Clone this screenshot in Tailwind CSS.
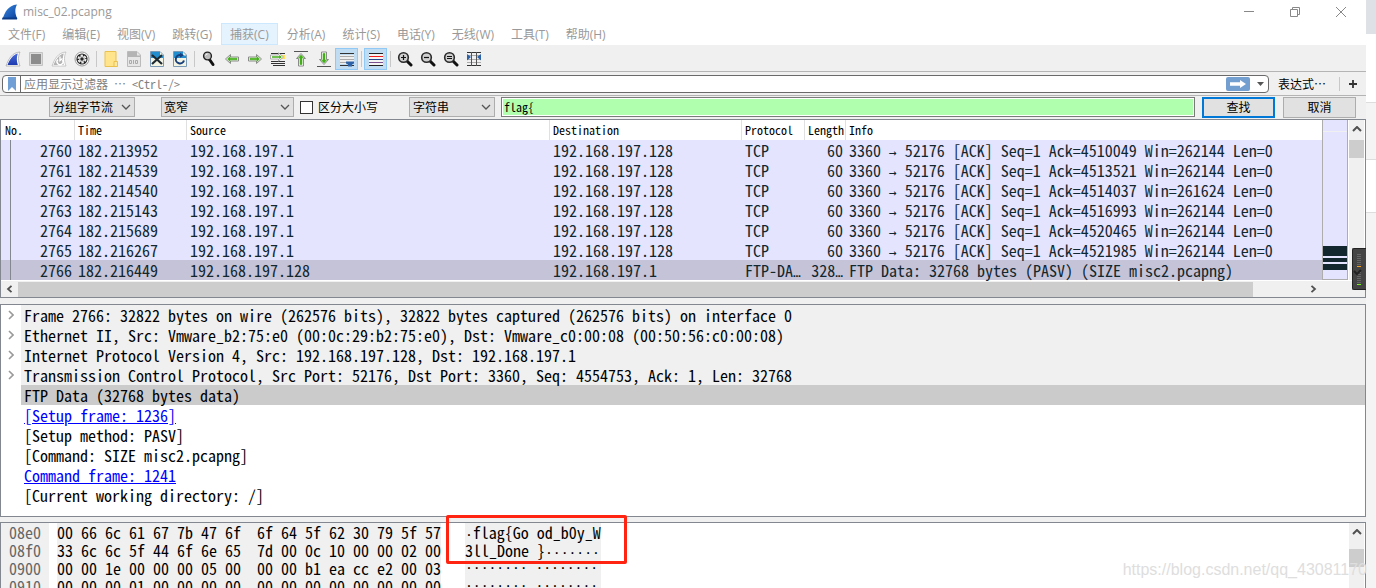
<!DOCTYPE html>
<html lang="zh-CN">
<head>
<meta charset="utf-8">
<title>misc_02.pcapng</title>
<script src="https://cdn.jsdelivr.net/npm/@tailwindcss/browser@4"></script>
</head>
<body class="relative flex h-screen overflow-hidden bg-white font-['Noto_Sans_Mono_CJK_SC','Noto_Sans_CJK_SC',monospace] text-xs text-black">

<svg class="absolute size-0">
  <defs>
    <linearGradient id="fin" x1="0" y1="0" x2="1" y2="1"><stop offset="0" stop-color="#3a8be0"/><stop offset="1" stop-color="#0a3f9c"/></linearGradient>
    <linearGradient id="finblue" x1="0" y1="0" x2="0" y2="1"><stop offset="0" stop-color="#4a6ad8"/><stop offset="1" stop-color="#1d3bb0"/></linearGradient>
    <symbol id="down" viewBox="0 0 10 6"><path d="M1 1l4 4 4-4" fill="none" stroke="#555" stroke-width="1.3"/></symbol>
    <symbol id="expand" viewBox="0 0 6 10"><path d="M1 1l4 4-4 4" fill="none" stroke="#9a9a9a" stroke-width="1.6"/></symbol>
    <symbol id="arrow" viewBox="0 0 16 16"><path d="M1.500 8L6.500 3.500V6H14.500V10H6.500V12.500Z" fill="#fff" stroke="#8a8a8a"/><path d="M3.500 8L6 5.500V7.200H13V8.800H6V10.500Z" fill="#43b018" stroke="#43b018" stroke-width=".6"/></symbol>
    <symbol id="lens" viewBox="0 0 16 16"><path d="M9.500 9.500l4.500 4.500" stroke="#111" stroke-width="3" stroke-linecap="round"/><circle cx="6.500" cy="6.500" r="4.800" fill="#cfcfcf" stroke="#2a2a2a" stroke-width="1.600"/></symbol>
  </defs>
</svg>

<main class="flex min-w-0 flex-1 flex-col bg-[#f0f0f0]">

  <header class="bg-white font-['Open_Sans','Noto_Sans_CJK_SC',sans-serif] text-[#999]">
    <div class="flex h-[23px] items-center">
      <svg class="ml-[2px] size-4" viewBox="0 0 16 16"><path d="M0.500 15C3 8 6 1.500 15 0.500C12.500 5 13 10 15.500 15Z" fill="url(#fin)"/><path d="M0.500 13.500H15V15.500H0Z" fill="#0b3a86"/></svg>
      <h1 class="ml-[5px] flex-1 pt-px text-xs">misc_02.pcapng</h1>
      <div class="mr-[2px] flex text-[#888]">
        <button aria-label="最小化" class="flex w-[46px] justify-center"><svg class="size-3" viewBox="0 0 12 12"><path d="M1 5.500h10" stroke="currentColor"/></svg></button>
        <button aria-label="还原" class="flex w-[46px] justify-center"><svg class="size-3" viewBox="0 0 12 12" fill="none" stroke="currentColor"><path d="M1.500 3.500h7v7h-7zM3.500 3.500v-2h7v7h-2"/></svg></button>
        <button aria-label="关闭" class="flex w-[46px] justify-center"><svg class="size-3" viewBox="0 0 12 12"><path d="M1 1l10 10M11 1L1 11" stroke="currentColor"/></svg></button>
      </div>
    </div>
    <nav class="flex h-[23px] items-stretch gap-px border-b border-[#f0f0f0]">
      <button class="px-2 pt-[2px]">文件(F)</button>
      <button class="px-2 pt-[2px]">编辑(E)</button>
      <button class="px-2 pt-[2px]">视图(V)</button>
      <button class="px-2 pt-[2px]">跳转(G)</button>
      <button class="border border-[#cce8ff] bg-[#e5f3ff] px-2 pt-[2px]">捕获(C)</button>
      <button class="px-2 pt-[2px]">分析(A)</button>
      <button class="px-2 pt-[2px]">统计(S)</button>
      <button class="px-2 pt-[2px]">电话(Y)</button>
      <button class="px-2 pt-[2px]">无线(W)</button>
      <button class="px-2 pt-[2px]">工具(T)</button>
      <button class="px-2 pt-[2px]">帮助(H)</button>
    </nav>
  </header>

  <div class="flex h-[26px] items-center border-b border-[#b4b4b4] pl-px" role="toolbar">
    <button aria-label="开始捕获" class="flex h-[22px] w-[23px] items-center justify-center"><svg class="size-4" viewBox="0 0 16 16"><path d="M1 15C3.500 8 7 1.500 15 1C13 5 13 10 15 15Z" fill="#fff" stroke="#aaa" stroke-width=".8"/><path d="M2.500 14C5 8 8 3.500 12.800 2.500C11.500 6 11.500 10 12.800 14Z" fill="url(#finblue)"/></svg></button>
    <button aria-label="停止捕获" class="flex h-[22px] w-[23px] items-center justify-center"><svg class="size-4" viewBox="0 0 16 16"><path d="M1.500 1.500h13v13h-13z" fill="#ddd" stroke="#c4c4c4"/><path d="M3 3h10v10H3z" fill="#8c8c8c"/></svg></button>
    <button aria-label="重新开始捕获" class="flex h-[22px] w-[23px] items-center justify-center"><svg class="size-4" viewBox="0 0 16 16"><path d="M1 15C3.500 8 7 1.500 15 1C13 5 13 10 15 15Z" fill="#fff" stroke="#bbb" stroke-width=".8"/><path d="M2.500 14C5 8 8 3.500 12.800 2.500C11.500 6 11.500 10 12.800 14Z" fill="#b4b4b4"/><path d="M7 8.500a3 3 0 1 0 4.500 .5M9 5.500v4l2.500-2" fill="none" stroke="#fff" stroke-width="1.400"/></svg></button>
    <button aria-label="捕获选项" class="flex h-[22px] w-[23px] items-center justify-center"><svg class="size-4" viewBox="0 0 16 16"><circle cx="8" cy="8" r="7" fill="#fff" stroke="#999" stroke-width="1"/><circle cx="8" cy="8" r="5.600" fill="#252525"/><circle cx="8" cy="8" r="3.600" fill="none" stroke="#eee" stroke-width="1.800" stroke-dasharray="2.400 1.370"/><circle cx="8" cy="8" r="2.900" fill="#ddd"/><circle cx="8" cy="8" r="1.700" fill="#252525"/></svg></button>
    <span class="flex w-[6px] justify-center"><span class="h-4 w-px bg-[#c8c8c8]"></span></span>
    <button aria-label="打开" class="flex h-[22px] w-[23px] items-center justify-center"><svg class="size-4" viewBox="0 0 16 16"><path d="M2 .5h11v15H2z" fill="#ffe48c" stroke="#eac14c"/><path d="M11 10.500h3.500v5H11z" fill="#ffe9a0" stroke="#eac14c"/></svg></button>
    <button aria-label="保存" class="flex h-[22px] w-[23px] items-center justify-center"><svg class="size-4" viewBox="0 0 16 16"><path d="M1.500.500h9.500l3.500 3.500v11.500h-13z" fill="#e6e6e6" stroke="#bbb"/><path d="M2 1h9v3.500h3V6H2z" fill="#b4b4b4"/><g fill="none" stroke="#aaa"><path d="M3.500 9.500h2v3h-2zM7.500 9v4M9.500 9.500h2v3h-2z"/></g></svg></button>
    <button aria-label="关闭文件" class="flex h-[22px] w-[23px] items-center justify-center"><svg class="size-4" viewBox="0 0 16 16"><path d="M1.500.500h9.500l3.500 3.500v11.500h-13z" fill="#f4f4e4" stroke="#7a9ab5"/><path d="M2 1h9v3.500h3V7H2z" fill="#218ed0"/><path d="M3 4l10 9M13 4L3 13" stroke="#1c2930" stroke-width="2.200"/></svg></button>
    <button aria-label="重新加载" class="flex h-[22px] w-[23px] items-center justify-center"><svg class="size-4" viewBox="0 0 16 16"><path d="M1.500.500h9.500l3.500 3.500v11.500h-13z" fill="#f4f4e4" stroke="#7a9ab5"/><path d="M2 1h9v3.500h3V7H2z" fill="#218ed0"/><path d="M9 4.200a4.200 4.200 0 1 0 3 5.300" fill="none" stroke="#173f7c" stroke-width="2"/><path d="M8 1.800v5l4-2.500z" fill="#173f7c"/></svg></button>
    <span class="flex w-[6px] justify-center"><span class="h-4 w-px bg-[#c8c8c8]"></span></span>
    <button aria-label="查找分组" class="flex h-[22px] w-[23px] items-center justify-center"><svg class="size-4" viewBox="0 0 16 16"><path d="M8.500 8.500l3.500 5" stroke="#111" stroke-width="3" stroke-linecap="round"/><circle cx="6.500" cy="5" r="3.900" fill="#bcbcbc" stroke="#222" stroke-width="1.400"/><path d="M4.500 4.500a2 2 0 0 1 2-1.500" stroke="#fff" fill="none"/></svg></button>
    <button aria-label="后退" class="flex h-[22px] w-[23px] items-center justify-center"><svg class="size-4"><use href="#arrow"/></svg></button>
    <button aria-label="前进" class="flex h-[22px] w-[23px] items-center justify-center"><svg class="size-4 rotate-180"><use href="#arrow"/></svg></button>
    <button aria-label="转到分组" class="flex h-[22px] w-[23px] items-center justify-center"><svg class="size-4" viewBox="0 0 16 16"><path d="M1 2.500h14M1 10.500h14M1 12.500h14M3 14.500h12" stroke="#333"/><path d="M11 4h4v4h-4z" fill="#ffe25c"/><path d="M13.500 6L8.500 1.800V4H.500V8H8.500V10.200Z" fill="#fff" stroke="#999" stroke-width=".8"/><path d="M11.800 6L9.300 3.800V5.200H2V6.800H9.300V8.200Z" fill="#43b018"/></svg></button>
    <button aria-label="首个分组" class="flex h-[22px] w-[23px] items-center justify-center"><svg class="size-4" viewBox="0 0 16 16"><path d="M1 .5h14" stroke="#555"/><path d="M8 2.500L12.500 7.500H10.500V15H5.500V7.500H3.500Z" fill="#fff" stroke="#8a8a8a"/><path d="M8 4L10.500 6.800H9V13.500H7V6.800H5.500Z" fill="#43b018" stroke="#43b018" stroke-width=".6"/></svg></button>
    <button aria-label="最新分组" class="flex h-[22px] w-[23px] items-center justify-center"><svg class="size-4" viewBox="0 0 16 16"><path d="M1 15.500h14" stroke="#555"/><path d="M8 13.500L12.500 8.500H10.500V1H5.500V8.500H3.500Z" fill="#fff" stroke="#8a8a8a"/><path d="M8 12L10.500 9.200H9V2.500H7V9.200H5.500Z" fill="#43b018" stroke="#43b018" stroke-width=".6"/></svg></button>
    <button aria-label="自动滚动" aria-pressed="true" class="flex h-[22px] w-[23px] items-center justify-center border border-[#90c8f6] bg-[#c0dcf3]"><svg class="size-4" viewBox="0 0 16 16"><path d="M1 4h14v9H1z" fill="#eee"/><path d="M1 2.500h14M1 14.500h14" stroke="#333"/><path d="M1 5.500h14M1 8.500h14M1 11.500h7" stroke="#aaa"/><path d="M7 10.500h8v2l-2 1v2H9v-2l-2-1z" fill="#2d62a8"/></svg></button>
    <span class="flex w-[6px] justify-center"><span class="h-4 w-px bg-[#c8c8c8]"></span></span>
    <button aria-label="着色分组" aria-pressed="true" class="flex h-[22px] w-[23px] items-center justify-center border border-[#90c8f6] bg-[#c0dcf3]"><svg class="size-4" viewBox="0 0 16 16"><path d="M1 2h14v13H1z" fill="#f4f4f4"/><path d="M1 2.500h14M1 14.500h14" stroke="#222"/><path d="M1 5.500h14" stroke="#f01c1c"/><path d="M1 8.500h14" stroke="#26458c"/><path d="M1 11.500h14" stroke="#7a5090"/></svg></button>
    <span class="flex w-[6px] justify-center"><span class="h-4 w-px bg-[#c8c8c8]"></span></span>
    <button aria-label="放大" class="flex h-[22px] w-[23px] items-center justify-center"><svg class="size-4" viewBox="0 0 16 16"><use href="#lens"/><path d="M4 6.500h5M6.500 4v5" stroke="#111" stroke-width="1.200"/></svg></button>
    <button aria-label="缩小" class="flex h-[22px] w-[23px] items-center justify-center"><svg class="size-4" viewBox="0 0 16 16"><use href="#lens"/><path d="M4 6.500h5" stroke="#111" stroke-width="1.200"/></svg></button>
    <button aria-label="原始大小" class="flex h-[22px] w-[23px] items-center justify-center"><svg class="size-4" viewBox="0 0 16 16"><use href="#lens"/><path d="M4 5.500h5M4 7.500h5" stroke="#111"/></svg></button>
    <button aria-label="调整列宽" class="flex h-[22px] w-[23px] items-center justify-center"><svg class="size-4" viewBox="0 0 16 16"><path d="M1 1.500h14M1 14.500h14" stroke="#333"/><path d="M1 4.500h14M1 8.500h14M1 11.500h14" stroke="#aaa"/><path d="M5.500 1v14M10.500 1v14" stroke="#555"/><path d="M1 3l4 3-4 3.500zM15 3l-4 3 4 3.500z" fill="#2d62a8"/></svg></button>
  </div>

  <div class="flex h-[24px] items-center border-b border-[#b4b4b4] pl-[2px]">
    <div class="flex h-[18px] min-w-0 flex-1 items-center rounded-sm border border-[#6a6a6a] bg-white">
      <button aria-label="书签" class="flex h-full w-[18px] items-center justify-center border-r border-[#6a6a6a]"><svg class="h-[14px] w-2" viewBox="0 0 8 14"><path d="M0 0h8v14l-4-4-4 4z" fill="#6f9fd4"/></svg></button>
      <input aria-label="显示过滤器" placeholder="应用显示过滤器 … &lt;Ctrl-/&gt;" class="h-4 min-w-0 flex-1 bg-white pl-[3px] text-xs outline-none placeholder:text-[#808080]">
      <button aria-label="应用" class="flex h-[14px] w-6 items-center justify-center rounded-xs bg-[#729fcf]"><svg class="h-2 w-4" viewBox="0 0 16 8"><path d="M0 2.300h10V0l6 4-6 4V5.700H0z" fill="#fff"/></svg></button>
      <button aria-label="历史" class="flex w-[18px] justify-center pl-1"><svg class="h-1 w-[7px]" viewBox="0 0 7 4"><path d="M0 0h7L3.500 4z" fill="#555"/></svg></button>
    </div>
    <button class="ml-[9px] text-xs">表达式…</button>
    <span class="ml-[13px] h-[14px] w-px bg-[#c8c8c8]"></span>
    <button aria-label="添加" class="mr-[9px] ml-[9px]"><svg class="size-2" viewBox="0 0 8 8"><path d="M0 4h8M4 0v8" stroke="#333" stroke-width="1.800"/></svg></button>
  </div>

  <form class="flex h-[23px] items-center pb-px pl-[49px]">
    <div class="relative w-[86px]">
      <select aria-label="搜索范围" class="block h-5 w-full appearance-none border border-[#adadad] bg-[#e1e1e1] pl-[3px] text-xs"><option>分组字节流</option></select>
      <svg class="pointer-events-none absolute top-[7px] right-1 h-[6px] w-[10px]"><use href="#down"/></svg>
    </div>
    <div class="relative ml-[26px] w-[133px]">
      <select aria-label="字符宽度" class="block h-5 w-full appearance-none border border-[#adadad] bg-[#e1e1e1] pl-[2px] text-xs"><option>宽窄</option></select>
      <svg class="pointer-events-none absolute top-[7px] right-1 h-[6px] w-[10px]"><use href="#down"/></svg>
    </div>
    <label class="ml-[6px] flex items-center gap-[5px] whitespace-nowrap"><input type="checkbox" class="size-[13px] appearance-none border border-[#333] bg-white">区分大小写</label>
    <div class="relative ml-[31px] w-[86px]">
      <select aria-label="搜索类型" class="block h-5 w-full appearance-none border border-[#adadad] bg-[#e1e1e1] pl-[3px] text-xs"><option>字符串</option></select>
      <svg class="pointer-events-none absolute top-[7px] right-1 h-[6px] w-[10px]"><use href="#down"/></svg>
    </div>
    <div class="ml-[6px] min-w-0 flex-1 border border-[#7a7a7a] bg-white p-px"><input aria-label="搜索内容" value="flag{" class="block h-4 w-full bg-[#afffaf] pl-px text-xs outline-none"></div>
    <button type="button" class="ml-[7px] flex h-[21px] w-[73px] items-center justify-center border-2 border-[#0078d7] bg-[#e1e1e1]">查找</button>
    <button type="button" class="mr-[10px] ml-2 flex h-[21px] w-[73px] items-center justify-center border border-[#adadad] bg-[#e1e1e1]">取消</button>
  </form>

  <section class="border border-[#828790] bg-white">
    <div class="flex">
      <div class="relative min-w-0 flex-1">
        <table class="w-full table-fixed border-separate border-spacing-0 text-left text-[#12272e]">
          <colgroup><col class="w-[74px]"><col class="w-[112px]"><col class="w-[363px]"><col class="w-[192px]"><col class="w-[63px]"><col class="w-[41px]"><col></colgroup>
          <thead>
            <tr class="h-5 text-xs leading-5 text-black">
              <th class="border-r border-[#e0e0e0] p-0 pl-1 font-normal">No.</th>
              <th class="border-r border-[#e0e0e0] p-0 pl-[3px] font-normal">Time</th>
              <th class="border-r border-[#e0e0e0] p-0 pl-[3px] font-normal">Source</th>
              <th class="border-r border-[#e0e0e0] p-0 pl-[3px] font-normal">Destination</th>
              <th class="border-r border-[#e0e0e0] p-0 pl-[3px] font-normal">Protocol</th>
              <th class="border-r border-[#e0e0e0] p-0 pl-[3px] font-normal">Length</th>
              <th class="p-0 pl-[3px] font-normal">Info</th>
            </tr>
          </thead>
          <tbody id="packets" class="bg-[#e4e4ff] text-base leading-5 whitespace-nowrap"></tbody>
        </table>
        <span class="absolute top-5 bottom-0 left-[9px] w-px bg-[#828790]"></span>
      </div>
      <div class="flex w-[26px] flex-col border-x border-b border-[#adadad] bg-[#e4e4ff]">
        <span class="mt-[11px] h-px bg-[#f0f0f0]"></span>
        <span class="mt-auto h-[10px] bg-[#12272e]"></span>
        <span class="mt-[2px] h-1 bg-[#12272e]"></span>
        <span class="mt-[2px] mb-[9px] h-[6px] bg-[#12272e]"></span>
      </div>
      <div class="mr-px ml-px flex w-[15px] flex-col items-center bg-[#f0f0f0]">
        <svg class="mt-[6px] h-[6px] w-[10px] rotate-180" viewBox="0 0 10 6"><path d="M1 1l4 4 4-4" fill="none" stroke="#505050" stroke-width="2"/></svg>
        <span class="mt-2 h-[18px] w-full bg-[#cdcdcd]"></span>
      </div>
    </div>
    <div class="mt-px flex h-4 items-center bg-[#f0f0f0] pr-[48px]">
      <svg class="mx-[5px] h-2 w-[7px]" viewBox="0 0 7 8"><path d="M5.500 .8L2 4l3.500 3.200" fill="none" stroke="#505050" stroke-width="1.800"/></svg>
      <span class="h-[15px] flex-1 bg-[#cdcdcd]"></span>
      <svg class="ml-[57px] h-2 w-[7px]" viewBox="0 0 7 8"><path d="M1.500 .8L5 4l-3.500 3.200" fill="none" stroke="#505050" stroke-width="1.800"/></svg>
    </div>
  </section>

  <section class="mt-[6px] border border-[#828790] bg-white pb-[11px] text-base leading-5 whitespace-nowrap">
    <div class="flex"><span class="flex w-5 items-center justify-center"><svg class="h-[10px] w-[6px]"><use href="#expand"/></svg></span><p class="flex-1 bg-[#f0f0f0] pl-[3px]">Frame 2766: 32822 bytes on wire (262576 bits), 32822 bytes captured (262576 bits) on interface 0</p></div>
    <div class="flex"><span class="flex w-5 items-center justify-center"><svg class="h-[10px] w-[6px]"><use href="#expand"/></svg></span><p class="flex-1 bg-[#f0f0f0] pl-[3px]">Ethernet II, Src: Vmware_b2:75:e0 (00:0c:29:b2:75:e0), Dst: Vmware_c0:00:08 (00:50:56:c0:00:08)</p></div>
    <div class="flex"><span class="flex w-5 items-center justify-center"><svg class="h-[10px] w-[6px]"><use href="#expand"/></svg></span><p class="flex-1 bg-[#f0f0f0] pl-[3px]">Internet Protocol Version 4, Src: 192.168.197.128, Dst: 192.168.197.1</p></div>
    <div class="flex"><span class="flex w-5 items-center justify-center"><svg class="h-[10px] w-[6px]"><use href="#expand"/></svg></span><p class="flex-1 bg-[#f0f0f0] pl-[3px]">Transmission Control Protocol, Src Port: 52176, Dst Port: 3360, Seq: 4554753, Ack: 1, Len: 32768</p></div>
    <p class="ml-5 bg-[#cbcbcb] pl-[3px]">FTP Data (32768 bytes data)</p>
    <p class="pl-[23px]"><a href="#1236" class="text-[#0000ff] underline">[Setup frame: 1236]</a></p>
    <p class="pl-[23px]">[Setup method: PASV]</p>
    <p class="pl-[23px]">[Command: SIZE misc2.pcapng]</p>
    <p class="pl-[23px]"><a href="#1241" class="text-[#0000ff] underline">Command frame: 1241</a></p>
    <p class="pl-[23px]">[Current working directory: /]</p>
  </section>

  <section class="relative mt-[5px] flex min-h-0 flex-1 border border-b-0 border-[#828790] bg-white text-base leading-[18px] whitespace-pre">
    <div class="w-12 bg-[#f0f0f0] pl-2 text-[#666]">08e0
08f0
0900
0910</div>
    <div class="ml-2 bg-[#f0f0f0]">00 66 6c 61 67 7b 47 6f  6f 64 5f 62 30 79 5f 57
33 6c 6c 5f 44 6f 6e 65  7d 00 0c 10 00 00 02 00
00 00 1e 00 00 00 05 00  00 00 b1 ea cc e2 00 03
00 00 00 01 00 00 00 00  00 00 00 00 00 00 00 00</div>
    <div class="ml-6 w-[136px] bg-[#f0f0f0]"><p class="h-[18px]"><span class="font-['DejaVu_Sans_Mono',monospace] text-[13px] leading-none">·</span>flag{Go od_b0y_W</p><p class="h-[18px]">3ll_Done }<span class="font-['DejaVu_Sans_Mono',monospace] text-[13px] leading-none">·······</span></p><p class="h-[18px] font-['DejaVu_Sans_Mono',monospace] text-[13px]">········ ········</p><p class="h-[18px] font-['DejaVu_Sans_Mono',monospace] text-[13px]">········ ········</p></div>
    <div class="mr-px ml-auto flex w-[15px] flex-col items-center bg-[#f0f0f0]">
      <svg class="mt-[6px] h-[6px] w-[10px] rotate-180" viewBox="0 0 10 6"><path d="M1 1l4 4 4-4" fill="none" stroke="#505050" stroke-width="2"/></svg>
      <span class="mt-[14px] h-[18px] w-full bg-[#cdcdcd]"></span>
    </div>
    <span class="absolute -top-2 left-[445px] h-[49px] w-[181px] rounded-xs border-3 border-[#ff2312]"></span>
  </section>
</main>

<aside class="flex w-[10px] flex-col bg-[#f4f4f4]">
  <span class="h-[34px] bg-[#dee1e6]"></span>
  <span class="h-[69px] border-b border-[#ddd] bg-white"></span>
  <span class="mt-14 h-[54px] border-y border-[#ddd] bg-white"></span>
</aside>

<div class="absolute top-[248px] right-[10px] flex h-[42px] w-[14px] flex-col items-center rounded-l-xs border border-r-0 border-[#222] bg-[#444] pt-[5px]">
  <svg class="h-8 w-full" viewBox="0 0 13 32"><path d="M4 .5h4M4 2.500h4M4 4.500h4M4 6.500h4M4 8.500h4M4 10.500h4M4 18.500h4M4 20.500h4M4 22.500h4M4 24.500h4M4 26.500h4M4 28.500h4" stroke="#666"/><path d="M4 12.500h4" stroke="#f5a01a"/><path d="M4 30.500h4" stroke="#7df01a"/><path d="M1 17l3 3 4-4" fill="none" stroke="#222" stroke-width="2"/></svg>
</div>
<p class="pointer-events-none absolute right-[9px] bottom-[6px] font-['Liberation_Sans',sans-serif] text-base text-[#dedede]">https://blog.csdn.net/qq_43081170</p>

<script>
  const packets = [
    ['2760', '182.213952', '4510049', '262144'],
    ['2761', '182.214539', '4513521', '262144'],
    ['2762', '182.214540', '4514037', '261624'],
    ['2763', '182.215143', '4516993', '262144'],
    ['2764', '182.215689', '4520465', '262144'],
    ['2765', '182.216267', '4521985', '262144'],
  ];
  const narrow = c => `<span class="font-['DejaVu_Sans_Mono',monospace] text-[13px] leading-none">${c}</span>`;
  const row = (cls, no, time, src, dst, proto, len, info) => `<tr class="${cls}">
    <td class="p-0 pr-[3px] text-right">${no}</td><td class="p-0 pl-[3px]">${time}</td><td class="p-0 pl-[3px]">${src}</td>
    <td class="p-0 pl-[3px]">${dst}</td><td class="p-0 pl-[3px]">${proto}</td><td class="p-0 pr-[3px] text-right">${len}</td><td class="p-0 pl-[3px]">${info}</td></tr>`;
  document.getElementById('packets').innerHTML =
    packets.map(([no, time, ack, win]) => row('h-5', no, time, '192.168.197.1', '192.168.197.128', 'TCP', '60',
      `3360 ${narrow('→')} 52176 [ACK] Seq=1 Ack=${ack} Win=${win} Len=0`)).join('') +
    row('h-5 bg-[#c5c3d8]', '2766', '182.216449', '192.168.197.128', '192.168.197.1', 'FTP-DA' + narrow('…'), '328' + narrow('…'),
      'FTP Data: 32768 bytes (PASV) (SIZE misc2.pcapng)');
</script>
</body>
</html>
